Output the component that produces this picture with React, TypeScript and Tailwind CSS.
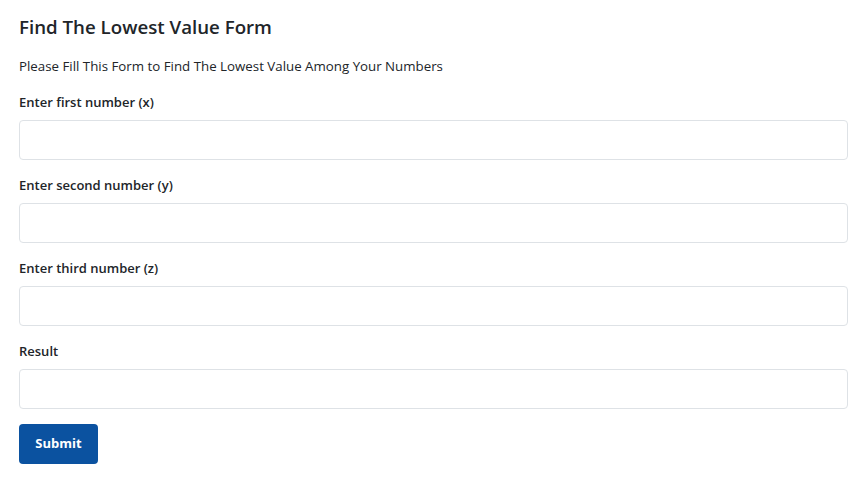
export default function App() {
  const fields = [
    'Enter first number (x)',
    'Enter second number (y)',
    'Enter third number (z)',
    'Result',
  ]
  return (
    <div className="min-h-[481px] bg-white pl-[19px] pr-[2px] pt-[14px] text-[#212529]" style={{ fontFamily: '"Open Sans", sans-serif' }}>
      <h4 className="text-[18.7px] font-semibold leading-[26px]">Find The Lowest Value Form</h4>
      <p className="mt-[16px] text-[13.3px] leading-[20px]">Please Fill This Form to Find The Lowest Value Among Your Numbers</p>
      <form className="mt-[16px]" onSubmit={(e) => e.preventDefault()}>
        {fields.map((label) => (
          <div key={label} className="mb-[15px]">
            <label className="block text-[13px] font-semibold leading-[20px]">{label}</label>
            <input
              type="text"
              className="mt-[8px] block h-[40px] w-full rounded-[4px] border border-[#dee2e6] bg-white px-3 outline-none"
            />
          </div>
        ))}
        <button type="submit" className="h-[40px] w-[79px] rounded-[4px] bg-[#0b52a0] text-[13px] font-bold text-white">
          Submit
        </button>
      </form>
    </div>
  )
}
